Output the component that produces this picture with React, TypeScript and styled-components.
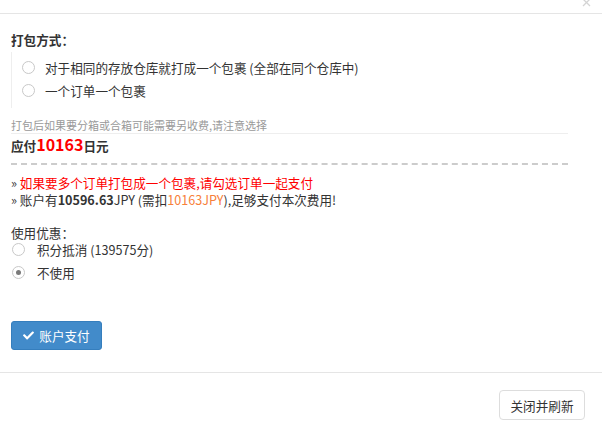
import React from 'react';
import styled, { createGlobalStyle } from 'styled-components';
import { FaCheck } from 'react-icons/fa';

const Global = createGlobalStyle`
    html, body {
        margin: 0;
        padding: 0;
        background: #fff;
    }
    body {
        font-family: "Noto Sans CJK SC", "Open Sans", sans-serif;
        font-size: 12.6px;
        color: #333;
    }
`;

const Modal = styled('div')`
    width: 602px;
    height: 426px;
    display: flex;
    flex-direction: column;
    overflow: hidden;
`;

const Header = styled('div')`
    height: 13px;
    border-bottom: 1px solid #e5e5e5;
    display: flex;
    justify-content: flex-end;
    align-items: flex-start;
    padding-right: 11px;
`;

const Close = styled('svg')`
    width: 9px;
    height: 8px;
`;

const Body = styled('div')`
    padding: 17px 34px 0 11px;
    height: 359px;
    box-sizing: border-box;
    border-bottom: 1px solid #e5e5e5;
    display: flex;
    flex-direction: column;
`;

const Label = styled('div')<{ $bold?: boolean }>`
    font-weight: ${p => (p.$bold ? 700 : 400)};
    line-height: 17px;
`;

const Options = styled('div')`
    border-left: 1px solid #eee;
    margin-top: 4px;
    padding: 7px 0 9px 10px;
    display: flex;
    flex-direction: column;
    gap: 6px;
`;

const Option = styled('label')`
    display: flex;
    align-items: center;
    gap: 10px;
    line-height: 17px;
    height: 17px;
`;

const Radio = styled('span')<{ $checked?: boolean }>`
    width: 11px;
    height: 11px;
    border-radius: 50%;
    border: 1px solid #c8c8c8;
    background: #fff;
    display: flex;
    align-items: center;
    justify-content: center;
    flex: none;

    &::after {
        content: '';
        width: 5px;
        height: 5px;
        border-radius: 50%;
        background: ${p => (p.$checked ? '#7a7a7a' : 'transparent')};
    }
`;

const Note = styled('div')`
    font-size: 11px;
    color: #999;
    line-height: 15px;
    margin-top: 10px;
    border-bottom: 1px solid #eee;
`;

const Total = styled('div')`
    font-weight: 700;
    line-height: 19px;
    margin-top: 1px;
    padding-bottom: 8px;
    border-bottom: 2px dashed #ccc;
`;

const Amount = styled('span')`
    color: #f00;
    font-size: 16px;
`;

const Tips = styled('div')`
    margin-top: 9px;
    display: flex;
    flex-direction: column;
`;

const Tip = styled('div')`
    line-height: 17px;
    height: 17px;
`;

const Red = styled('span')`
    color: #f00;
`;

const Orange = styled('span')`
    color: #f7803a;
`;

const Discount = styled('div')`
    margin-top: 16px;
    display: flex;
    flex-direction: column;
`;

const DiscountOption = styled(Option)`
    gap: 12px;
    padding-left: 1px;

    & + & {
        margin-top: 6px;
    }
`;

const PayButton = styled('button')`
    margin-top: 40px;
    align-self: flex-start;
    width: 91px;
    height: 29px;
    background: #428bca;
    border: 1px solid #357ebd;
    border-radius: 3px;
    color: #fff;
    font: inherit;
    display: flex;
    align-items: center;
    justify-content: center;
    gap: 5px;
    padding: 0;

    svg {
        width: 11px;
        height: 11px;
    }
`;

const Footer = styled('div')`
    display: flex;
    justify-content: flex-end;
    padding: 17px 17px 0 0;
`;

const CloseButton = styled('button')`
    width: 86px;
    height: 30px;
    background: #fff;
    border: 1px solid #ddd;
    border-radius: 4px;
    color: #333;
    font: inherit;
    padding: 0;
`;

export default () => (
    <Modal>
        <Global />
        <Header>
            <Close viewBox="0 0 9 8">
                <path d="M1 -1 L8 6 M8 -1 L1 6" stroke="#d4d4d4" strokeWidth="1.3" fill="none" />
            </Close>
        </Header>
        <Body>
            <Label $bold>打包方式：</Label>
            <Options>
                <Option><Radio />对于相同的存放仓库就打成一个包裹 (全部在同个仓库中)</Option>
                <Option><Radio />一个订单一个包裹</Option>
            </Options>
            <Note>打包后如果要分箱或合箱可能需要另收费,请注意选择</Note>
            <Total>应付<Amount>10163</Amount>日元</Total>
            <Tips>
                <Tip>» <Red>如果要多个订单打包成一个包裹,请勾选订单一起支付</Red></Tip>
                <Tip>» 账户有<b>10596.63</b>JPY (需扣<Orange>10163JPY</Orange>),足够支付本次费用!</Tip>
            </Tips>
            <Discount>
                <Label>使用优惠：</Label>
                <DiscountOption><Radio />积分抵消 (139575分)</DiscountOption>
                <DiscountOption><Radio $checked />不使用</DiscountOption>
            </Discount>
            <PayButton><FaCheck />账户支付</PayButton>
        </Body>
        <Footer>
            <CloseButton>关闭并刷新</CloseButton>
        </Footer>
    </Modal>
);
